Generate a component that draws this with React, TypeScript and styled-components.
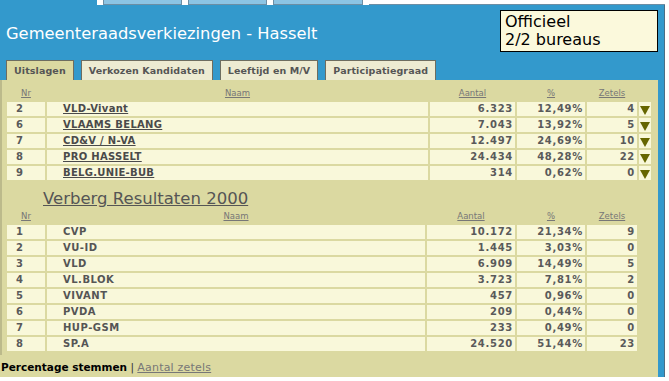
import React from 'react'
import styled, { createGlobalStyle } from 'styled-components'

const GlobalStyle = createGlobalStyle`
	html, body {
		margin: 0;
		padding: 0;
		background: #fff;
	}
	body {
		font-family: 'DejaVu Sans', Verdana, sans-serif;
	}
`

const Page = styled.div`
	width: 669px;
	height: 381px;
	overflow: hidden;
	background: #fff;
`

const TopNav = styled.div`
	display: flex;
	height: 5px;
`

const NavTab = styled.div<{ $active?: boolean; $width: number }>`
	width: ${({ $width }) => $width}px;
	box-sizing: border-box;
	margin-right: 6px;
	background: ${({ $active }) => ($active ? '#3399cc' : '#8cc4e4')};
	border: ${({ $active }) => ($active ? 'none' : '1px solid #6c8ea4')};
	border-top: none;
`

const NavFiller = styled.div`
	flex: 1;
	border-bottom: 1px solid #6c8ea4;
	margin-right: 4px;
`

const Header = styled.div`
	width: 664px;
	height: 372px;
	background: #3399cc;
	border-right: 1px solid #4b6e84;
	display: flex;
	flex-direction: column;
`

const TitleRow = styled.div`
	display: flex;
	justify-content: space-between;
	align-items: flex-start;
	padding: 5px 6px 0 6px;
`

const Title = styled.h1`
	margin: 14px 0 0;
	font-size: 16.3px;
	font-weight: normal;
	line-height: 20px;
	color: #fff;
`

const StatusBox = styled.div`
	width: 152px;
	height: 38px;
	padding: 2px 0 0 4px;
	border: 1px solid #000;
	background: #fbf9dc;
	color: #000;
	font-size: 16px;
	line-height: 18px;
`

const Tabs = styled.div`
	display: flex;
	gap: 7px;
	margin-top: 8px;
	padding-left: 6px;
`

const Tab = styled.div<{ $active?: boolean }>`
	height: 19px;
	line-height: 19px;
	padding: 0 7px;
	border: 1px solid #6d6d60;
	border-bottom: none;
	font-size: 9.5px;
	font-weight: bold;
	letter-spacing: 0.1px;
	color: #555;
	background: ${({ $active }) => ($active ? '#dbd9a1' : '#edebd2')};
`

const Panel = styled.div`
	width: 658px;
	flex: 1;
	background: #dbd9a1;
	display: flex;
	flex-direction: column;
`

const Content = styled.div`
	border-left: 2px solid #bcba8b;
	padding: 4px 0 2px 3px;
`

const Table = styled.table`
	border-collapse: separate;
	border-spacing: 2px;
	table-layout: fixed;
	font-size: 10px;

	th,
	td {
		box-sizing: border-box;
		height: 14px;
		padding: 0;
		line-height: 14px;
		white-space: nowrap;
		overflow: hidden;
	}
`

const HeadCell = styled.th<{ $width: number }>`
	width: ${({ $width }) => $width}px;
	font-size: 8.5px;
	font-weight: normal;
	color: #777;
	text-decoration: underline;
	text-align: center;
`

const Cell = styled.td<{ $align?: 'left' | 'right'; $pad?: number }>`
	background: #f9f8da;
	font-weight: bold;
	color: #5a5a5a;
	text-align: ${({ $align }) => $align || 'right'};
	padding-left: ${({ $align, $pad }) => ($align === 'left' ? $pad || 0 : 0)}px !important;
	padding-right: ${({ $align }) => ($align === 'left' ? 0 : 2)}px !important;
	letter-spacing: ${({ $align }) => ($align === 'left' ? 0 : 0.7)}px;
`

const PartyLink = styled.span`
	color: #4a4a4a;
	text-decoration: underline;
	letter-spacing: 0.3px;
`

const PartyName = styled.span`
	color: #555;
	letter-spacing: 0.5px;
`

const ArrowCell = styled.td`
	background: #f9f8da;
	text-align: center;

	svg {
		display: block;
		margin: 2px auto 0;
	}
`

const SectionTitle = styled.div`
	margin: 8px 0 0 38px;
	font-size: 16.5px;
	line-height: 17px;
	color: #555;
	text-decoration: underline;
`

const Footer = styled.div`
	margin-top: auto;
	padding: 0 0 2px 1px;
	font-size: 10.5px;
	line-height: 14px;
	color: #333;
`

const FooterActive = styled.span`
	font-weight: bold;
	color: #000;
`

const FooterLink = styled.span`
	color: #777;
	font-size: 11px;
	letter-spacing: 0.2px;
	text-decoration: underline;
`

type Row = [string, string, string, string, string]

const current: Row[] = [
	['2', 'VLD-Vivant', '6.323', '12,49%', '4'],
	['6', 'VLAAMS BELANG', '7.043', '13,92%', '5'],
	['7', 'CD&V / N-VA', '12.497', '24,69%', '10'],
	['8', 'PRO HASSELT', '24.434', '48,28%', '22'],
	['9', 'BELG.UNIE-BUB', '314', '0,62%', '0'],
]

const previous: Row[] = [
	['1', 'CVP', '10.172', '21,34%', '9'],
	['2', 'VU-ID', '1.445', '3,03%', '0'],
	['3', 'VLD', '6.909', '14,49%', '5'],
	['4', 'VL.BLOK', '3.723', '7,81%', '2'],
	['5', 'VIVANT', '457', '0,96%', '0'],
	['6', 'PVDA', '209', '0,44%', '0'],
	['7', 'HUP-GSM', '233', '0,49%', '0'],
	['8', 'SP.A', '24.520', '51,44%', '23'],
]

const Arrow = () => (
	<svg width="10" height="9" viewBox="0 0 10 9">
		<polygon points="0,0 10,0 5,9" fill="#666600" />
	</svg>
)

export default function App() {
	return (
		<Page>
			<GlobalStyle />
			<TopNav>
				<NavTab $active $width={97} />
				<NavTab $width={79} />
				<NavTab $width={79} />
				<NavTab $width={90} />
				<NavFiller />
			</TopNav>
			<Header>
				<TitleRow>
					<Title>Gemeenteraadsverkiezingen - Hasselt</Title>
					<StatusBox>
						Officieel
						<br />
						2/2 bureaus
					</StatusBox>
				</TitleRow>
				<Tabs>
					<Tab $active>Uitslagen</Tab>
					<Tab>Verkozen Kandidaten</Tab>
					<Tab>Leeftijd en M/V</Tab>
					<Tab>Participatiegraad</Tab>
				</Tabs>
				<Panel>
					<Content>
						<Table>
							<thead>
								<tr>
									<HeadCell $width={38}>Nr</HeadCell>
									<HeadCell $width={381}>Naam</HeadCell>
									<HeadCell $width={85}>Aantal</HeadCell>
									<HeadCell $width={68}>%</HeadCell>
									<HeadCell $width={50}>Zetels</HeadCell>
									<HeadCell $width={12} />
								</tr>
							</thead>
							<tbody>
								{current.map(([nr, name, votes, pct, seats]) => (
									<tr key={nr}>
										<Cell $align="left" $pad={9}>{nr}</Cell>
										<Cell $align="left" $pad={16}>
											<PartyLink>{name}</PartyLink>
										</Cell>
										<Cell>{votes}</Cell>
										<Cell>{pct}</Cell>
										<Cell>{seats}</Cell>
										<ArrowCell>
											<Arrow />
										</ArrowCell>
									</tr>
								))}
							</tbody>
						</Table>
						<SectionTitle>Verberg Resultaten 2000</SectionTitle>
						<Table>
							<thead>
								<tr>
									<HeadCell $width={38}>Nr</HeadCell>
									<HeadCell $width={378}>Naam</HeadCell>
									<HeadCell $width={88}>Aantal</HeadCell>
									<HeadCell $width={68}>%</HeadCell>
									<HeadCell $width={50}>Zetels</HeadCell>
								</tr>
							</thead>
							<tbody>
								{previous.map(([nr, name, votes, pct, seats]) => (
									<tr key={nr}>
										<Cell $align="left" $pad={9}>{nr}</Cell>
										<Cell $align="left" $pad={16}>
											<PartyName>{name}</PartyName>
										</Cell>
										<Cell>{votes}</Cell>
										<Cell>{pct}</Cell>
										<Cell>{seats}</Cell>
									</tr>
								))}
							</tbody>
						</Table>
					</Content>
					<Footer>
						<FooterActive>Percentage stemmen</FooterActive> | <FooterLink>Aantal zetels</FooterLink>
					</Footer>
				</Panel>
			</Header>
		</Page>
	)
}
